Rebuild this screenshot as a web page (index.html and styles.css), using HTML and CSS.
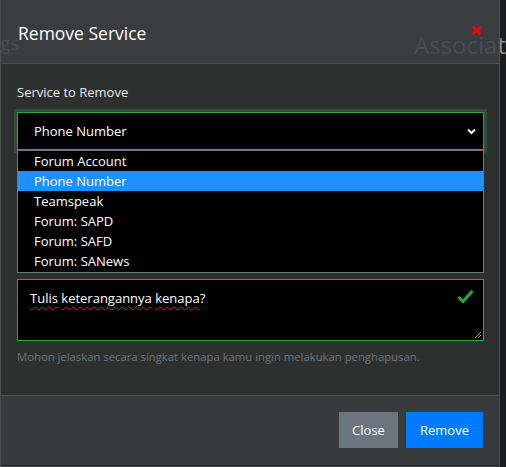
FILE: index.html
```html
<!DOCTYPE html>
<html lang="en">
<head>
    <meta charset="UTF-8">
    <title>Remove Service</title>
    <link rel="stylesheet" href="styles.css">
</head>
<body>
    <div class="backdrop">
        <span class="bg-left">gs</span>
        <span class="bg-right">Associat</span>
    </div>

    <div class="modal">
        <div class="modal-header">
            <h2>Remove Service</h2>
            <svg class="close-x" width="11" height="11" viewBox="0 0 11 11">
                <path d="M1.5 1.5 L9.5 9.5 M9.5 1.5 L1.5 9.5" stroke="#ff0000" stroke-width="2.6" fill="none"/>
            </svg>
        </div>

        <div class="modal-body">
            <label class="field-label">Service to Remove</label>
            <div class="select-box">
                <span>Phone Number</span>
                <svg width="9" height="7" viewBox="0 0 9 7">
                    <path d="M1 1.5 L4.5 5 L8 1.5" stroke="#fff" stroke-width="2" fill="none"/>
                </svg>
            </div>
            <ul class="option-list">
                <li>Forum Account</li>
                <li class="active">Phone Number</li>
                <li>Teamspeak</li>
                <li>Forum: SAPD</li>
                <li>Forum: SAFD</li>
                <li>Forum: SANews</li>
            </ul>

            <div class="reason-box">
                <span class="reason-text"><u>Tulis</u> <u>keterangannya</u> <u>kenapa</u>?</span>
                <svg class="valid-icon" width="17" height="15" viewBox="0 0 17 15">
                    <path d="M1.5 8 L6 12.5 L15.5 2" stroke="#28a745" stroke-width="3" fill="none"/>
                </svg>
                <svg class="resize-grip" width="8" height="8" viewBox="0 0 8 8">
                    <path d="M7 1 L1 7 M7 4 L4 7" stroke="#9a9a9a" stroke-width="1" fill="none"/>
                </svg>
            </div>
            <p class="help-text">Mohon jelaskan secara singkat kenapa kamu ingin melakukan penghapusan.</p>
        </div>

        <div class="modal-footer">
            <button class="btn btn-secondary">Close</button>
            <button class="btn btn-primary">Remove</button>
        </div>
    </div>
</body>
</html>
```

FILE: styles.css
```css
* {
    margin: 0;
    padding: 0;
    box-sizing: border-box;
}

body {
    width: 506px;
    height: 467px;
    overflow: hidden;
    background: #1c1d1e;
    font-family: 'Open Sans', 'Noto Sans', sans-serif;
    color: #fff;
    position: relative;
}

/* page behind the modal, seen through the header */
.backdrop {
    position: absolute;
    top: 0;
    left: 0;
    width: 506px;
    height: 64px;
}

.bg-left {
    position: absolute;
    left: 0;
    top: 30px;
    font-size: 19px;
    color: #7d8185;
}

.bg-right {
    position: absolute;
    left: 414px;
    top: 28px;
    font-size: 24px;
    color: #8a8d90;
    white-space: nowrap;
}

.modal {
    position: relative;
    width: 500px;
    height: 467px;
    border: 1px solid #4a4c4e;
    border-top: none;
    display: flex;
    flex-direction: column;
}

.modal-header {
    height: 64px;
    display: flex;
    justify-content: space-between;
    align-items: flex-start;
    padding: 22px 17px 0 17px;
    background: rgba(63, 66, 70, 0.86);
    border-bottom: 1px solid #4b4e51;
}

.modal-header h2 {
    font-size: 17.5px;
    font-weight: 400;
    line-height: 22px;
}

.close-x {
    margin-top: 3px;
    margin-right: 0;
}

.modal-body {
    flex: 1;
    padding: 19px 15px 0 16px;
    background: #2e302f;
}

.field-label {
    display: block;
    font-size: 13px;
    line-height: 18px;
    color: #e6e6e6;
    margin-bottom: 11px;
}

.select-box {
    height: 38px;
    background: #000;
    border: 1px solid #28a745;
    box-shadow: 0 0 0 3px rgba(40, 167, 69, 0.25);
    display: flex;
    align-items: center;
    justify-content: space-between;
    padding: 0 7px 0 16px;
    font-size: 13px;
}

.option-list {
    list-style: none;
    background: #000;
    border: 1px solid #767676;
    padding-bottom: 1px;
}

.option-list li {
    height: 20px;
    line-height: 20px;
    padding-left: 16px;
    font-size: 13px;
}

.option-list li.active {
    background: #1e90ff;
}

.reason-box {
    position: relative;
    height: 62px;
    margin-top: 6px;
    background: #000;
    border: 1px solid #28a745;
    padding: 8px 12px;
    font-size: 13px;
    line-height: 20px;
}

.reason-text u {
    text-decoration: underline wavy #e0201c;
    text-decoration-thickness: 1px;
    text-underline-offset: 3px;
}

.valid-icon {
    position: absolute;
    right: 9px;
    top: 9px;
}

.resize-grip {
    position: absolute;
    right: 1px;
    bottom: 1px;
}

.help-text {
    margin-top: 8px;
    font-size: 11.3px;
    color: #6c757d;
}

.modal-footer {
    height: 71px;
    display: flex;
    justify-content: flex-end;
    align-items: center;
    gap: 8px;
    padding: 0 16px 2px 0;
    background: #383b3e;
    border-top: 1px solid #4a4c4e;
    border-bottom: 1px solid #1f2021;
}

.btn {
    height: 36px;
    border: none;
    color: #fff;
    font-family: inherit;
    font-size: 13px;
    padding: 0 12px;
}

.btn-secondary {
    background: #6c757d;
    width: 59px;
}

.btn-primary {
    background: #007bff;
    width: 77px;
}
```
